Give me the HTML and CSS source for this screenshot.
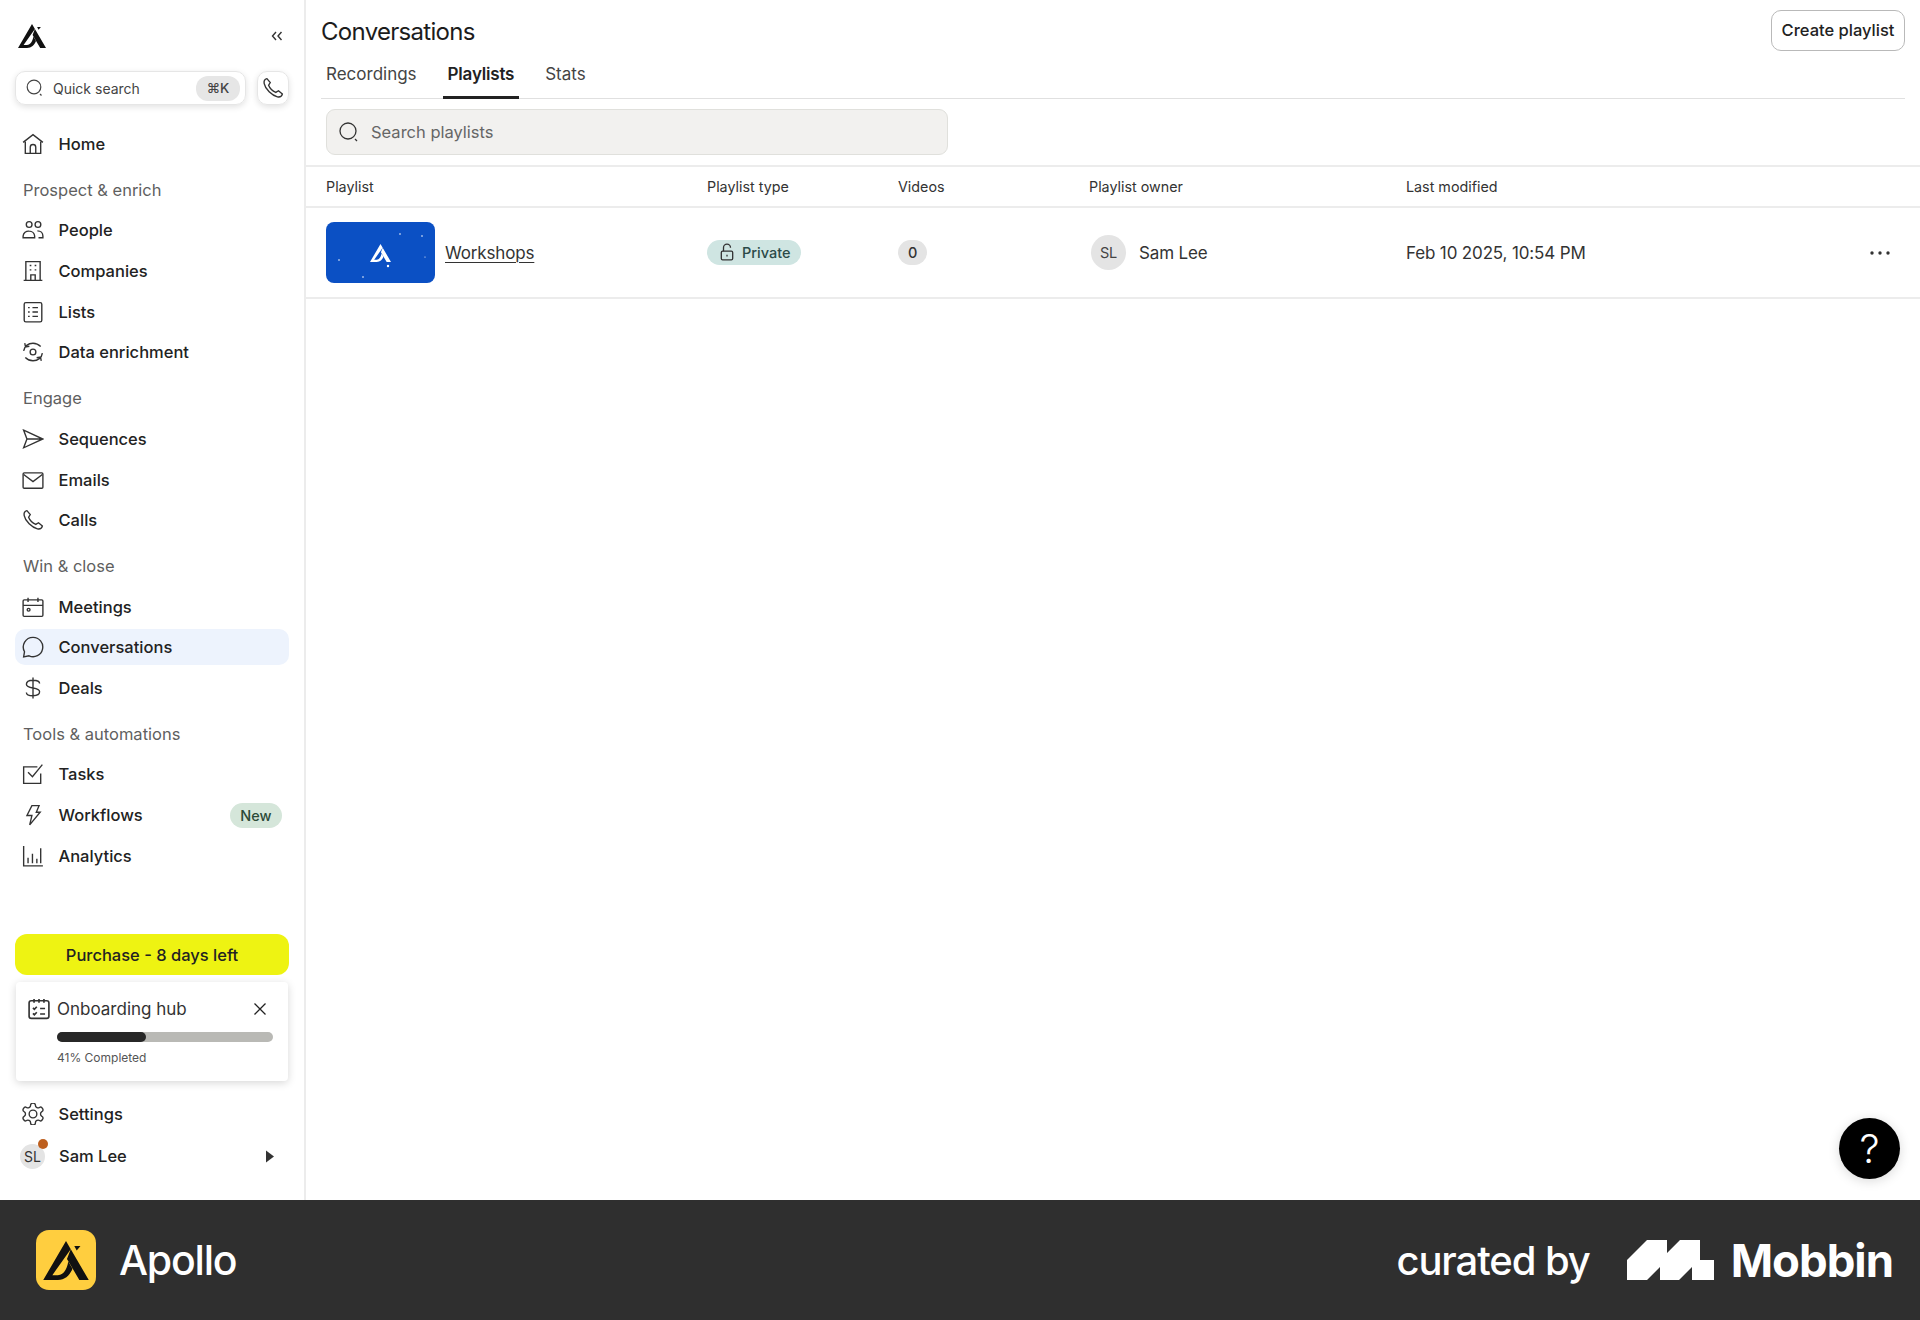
FILE: index.html
```html
<!DOCTYPE html>
<html lang="en">
<head>
    <meta charset="UTF-8">
    <meta name="viewport" content="width=device-width, initial-scale=1.0">
    <title>Conversations</title>
    <link rel="stylesheet" href="styles.css">
</head>
<body>
    <div class="shell">
        <!-- Sidebar -->
        <aside class="sidebar">
            <div class="brand-row">
                <svg class="brand-logo" viewBox="0 0 28 24"><path d="M14 0 28 24h-5.800L14.600 11 16.900 5z"/><path d="M14 0 16.900 5 5.600 21H9c3.400 0 5.600-3.600 6.400-8.400l2.600 4.400C16.400 21 13.500 24 9 24H0z"/><path d="M19.100 3h3.800l-2.300 2.800z"/></svg>
                <svg class="collapse" viewBox="0 0 12 10"><path d="M5 1 1.500 5 5 9M10.500 1 7 5l3.500 4"/></svg>
            </div>
            <div class="search-row">
                <div class="quick-search">
                    <svg class="icon-small" viewBox="0 0 20 20"><circle cx="9" cy="9" r="6.800"/><path d="m15 16 1.500 1.500"/></svg>
                    <span class="quick-label">Quick search</span>
                    <span class="kbd">⌘K</span>
                </div>
                <div class="phone-button">
                    <svg class="icon" viewBox="0 0 20 20"><path d="M4.500 1.500C2.500 2 1.500 3.500 2 6c1 5 7 11 12 12 2.500.5 4-.5 4.500-2.500l-3.500-3-2.500 1.500C10 13 7 10 6 7.500L7.500 5z"/></svg>
                </div>
            </div>

            <nav class="nav">
                <a class="nav-item"><svg class="icon" viewBox="0 0 20 20"><path d="M1 8.500 10 1.500l9 7M3 8v10.500h14V8M7.500 18.500V13a2.500 2.500 0 0 1 5 0v5.500"/></svg>Home</a>

                <div class="nav-label">Prospect &amp; enrich</div>
                <a class="nav-item"><svg class="icon" viewBox="0 0 20 20"><circle cx="6.500" cy="5" r="2.600"/><circle cx="14.500" cy="5" r="2.600"/><path d="M1 17v-1.500a5 5 0 0 1 5.500-4.500 5 5 0 0 1 5 4.500V17zM14 10.800c3 0 5 2 5 4.700V17h-4"/></svg>People</a>
                <a class="nav-item"><svg class="icon" viewBox="0 0 20 20"><path d="M1.500 18.500h17M3.500 18.500V1.500h13v17M8 18.500v-5h4v5M7 5h1.500M11.500 5H13M7 9h1.500M11.500 9H13"/></svg>Companies</a>
                <a class="nav-item"><svg class="icon" viewBox="0 0 20 20"><rect x="2" y="1.500" width="16" height="17.500" rx="1.500"/><path d="M5.500 6H7M9.500 6h5M5.500 10H7M9.500 10h5M5.500 14H7M9.500 14h5"/></svg>Lists</a>
                <a class="nav-item"><svg class="icon" viewBox="0 0 20 20"><circle cx="10" cy="10" r="2.600"/><path d="M1.500 9C2 5 5.500 2 10 2c2.500 0 5 1 7 3M18.500 11c-.5 4-4 7-8.500 7-2.500 0-5-1-7-3M2.500 2l.7 3.500 3.500-.7M17.500 18l-.7-3.500-3.500.7"/></svg>Data enrichment</a>

                <div class="nav-label">Engage</div>
                <a class="nav-item"><svg class="icon" viewBox="0 0 20 20"><path d="M1.500 2 19 10 1.500 18l3-8zM4.500 10H19"/></svg>Sequences</a>
                <a class="nav-item"><svg class="icon" viewBox="0 0 20 20"><rect x="1" y="3.500" width="18" height="14" rx="1"/><path d="m1.500 5 8.500 6.500L18.500 5"/></svg>Emails</a>
                <a class="nav-item"><svg class="icon" viewBox="0 0 20 20"><path d="M4.500 1.500C2.500 2 1.500 3.500 2 6c1 5 7 11 12 12 2.500.5 4-.5 4.500-2.500l-3.500-3-2.500 1.500C10 13 7 10 6 7.500L7.500 5z"/></svg>Calls</a>

                <div class="nav-label">Win &amp; close</div>
                <a class="nav-item"><svg class="icon" viewBox="0 0 20 20"><rect x="1" y="3.500" width="18" height="15" rx="1"/><path d="M1 8.500h18M5.500 1.500v4M14.500 1.500v4"/><circle cx="6" cy="12.500" r="1.300"/></svg>Meetings</a>
                <a class="nav-item active"><svg class="icon" viewBox="0 0 20 20"><path d="M10 1.200a8.800 8.800 0 1 1-3.600 16.800L1.500 19l.8-4.700A8.800 8.800 0 0 1 10 1.200z"/></svg>Conversations</a>
                <a class="nav-item"><svg class="icon" viewBox="0 0 20 20"><path d="M16 6c0-2-2.500-3-6-3S4 4.500 4 6.700 6.500 9.500 10 10s6 1.300 6 3.500-2.500 3.500-6 3.500-6-1-6-3M10 .5v19"/></svg>Deals</a>

                <div class="nav-label">Tools &amp; automations</div>
                <a class="nav-item"><svg class="icon" viewBox="0 0 20 20"><path d="M17 9.500V18.500H1.500V3.500H14M5.500 8.500l4 4L18.500 1.500"/></svg>Tasks</a>
                <a class="nav-item item-badge"><svg class="icon" viewBox="0 0 20 20"><path d="M9 1.500h6.500L13 7.500h3.500L7 19l2-8.500H4.500z"/></svg>Workflows<span class="badge-new">New</span></a>
                <a class="nav-item"><svg class="icon" viewBox="0 0 20 20"><path d="M1.500 1v18h17.500M5.500 16.500v-5M9.500 16.500V8M13.500 16.500v-4M17 16.500V3"/></svg>Analytics</a>
            </nav>

            <div class="sidebar-bottom">
                <button class="purchase">Purchase - 8 days left</button>
                <div class="hub-card">
                    <div class="hub-head">
                        <svg class="icon hub-icon" viewBox="0 0 20 20"><rect x="1" y="2.500" width="18" height="16" rx="2"/><path d="M5.500.8v3.500M10 .8v3.500M14.500.8v3.500M4.500 9l1.300 1.300L8 8M11 9.500h4.500M4.500 14l1.300 1.300L8 13M11 14.500h4.500"/></svg>
                        <span class="hub-title">Onboarding hub</span>
                        <svg class="hub-close" viewBox="0 0 14 14"><path d="m1.500 1.500 11 11M12.500 1.500l-11 11"/></svg>
                    </div>
                    <div class="progress"><div class="progress-fill" style="width: 41%"></div></div>
                    <div class="progress-text">41% Completed</div>
                </div>
                <a class="nav-item"><svg class="icon" viewBox="2 2 20 20"><path d="M12.220 2h-.44a2 2 0 0 0-2 2v.18a2 2 0 0 1-1 1.730l-.43.25a2 2 0 0 1-2 0l-.15-.08a2 2 0 0 0-2.730.73l-.22.38a2 2 0 0 0 .73 2.730l.15.1a2 2 0 0 1 1 1.720v.51a2 2 0 0 1-1 1.740l-.15.09a2 2 0 0 0-.73 2.730l.22.38a2 2 0 0 0 2.730.73l.15-.08a2 2 0 0 1 2 0l.43.25a2 2 0 0 1 1 1.730V20a2 2 0 0 0 2 2h.44a2 2 0 0 0 2-2v-.18a2 2 0 0 1 1-1.730l.43-.25a2 2 0 0 1 2 0l.15.08a2 2 0 0 0 2.730-.73l.22-.39a2 2 0 0 0-.73-2.730l-.15-.08a2 2 0 0 1-1-1.740v-.5a2 2 0 0 1 1-1.740l.15-.09a2 2 0 0 0 .73-2.730l-.22-.38a2 2 0 0 0-2.730-.73l-.15.08a2 2 0 0 1-2 0l-.43-.25a2 2 0 0 1-1-1.730V4a2 2 0 0 0-2-2z"/><circle cx="12" cy="12" r="3.500"/></svg>Settings</a>
                <a class="nav-item user-item">
                    <span class="user-avatar">SL<span class="user-dot"></span></span>Sam Lee
                    <svg class="caret" viewBox="0 0 8 12"><path d="M0 0v12l8-6z"/></svg>
                </a>
            </div>
        </aside>

        <!-- Main content -->
        <main class="main">
            <div class="page-head">
                <div class="title-row">
                    <h1>Conversations</h1>
                    <button class="create-button">Create playlist</button>
                </div>
                <div class="tabs">
                    <a class="tab">Recordings</a>
                    <a class="tab tab-active">Playlists</a>
                    <a class="tab">Stats</a>
                </div>
            </div>

            <div class="filter-bar">
                <div class="search-box">
                    <svg class="search-icon" viewBox="0 0 22 22"><circle cx="10" cy="10" r="8"/><path d="m17 18 2 2"/></svg>
                    <span>Search playlists</span>
                </div>
            </div>

            <div class="table-row table-head">
                <div>Playlist</div>
                <div>Playlist type</div>
                <div>Videos</div>
                <div>Playlist owner</div>
                <div>Last modified</div>
                <div></div>
            </div>
            <div class="table-row table-body">
                <div class="cell-name">
                    <div class="thumb">
                        <svg class="thumb-logo" viewBox="0 0 28 24"><path d="M14 0 28 24h-5.800L14.600 11 16.900 5z"/><path d="M14 0 16.900 5 5.600 21H9c3.400 0 5.600-3.600 6.400-8.400l2.600 4.400C16.400 21 13.500 24 9 24H0z"/></svg>
                        <svg class="thumb-stars" viewBox="0 0 109 61"><circle cx="13" cy="38" r=".8"/><circle cx="37" cy="55" r=".8"/><circle cx="62" cy="44" r="1.200"/><circle cx="74" cy="12" r=".8"/><circle cx="96" cy="14" r=".8"/><circle cx="99" cy="35" r=".6"/></svg>
                    </div>
                    <a class="playlist-link">Workshops</a>
                </div>
                <div>
                    <span class="pill-private">
                        <svg class="lock" viewBox="0 0 16 20"><path d="M4 9V5a4 4 0 0 1 8 0"/><rect x="1.500" y="9" width="13" height="10" rx="1.500"/><path d="M8 13v2"/></svg>
                        Private
                    </span>
                </div>
                <div><span class="pill-count">0</span></div>
                <div class="cell-owner"><span class="owner-avatar">SL</span>Sam Lee</div>
                <div>Feb 10 2025, 10:54 PM</div>
                <div class="cell-more">
                    <svg class="more" viewBox="0 0 20 4"><circle cx="2" cy="2" r="1.700"/><circle cx="10" cy="2" r="1.700"/><circle cx="18" cy="2" r="1.700"/></svg>
                </div>
            </div>

            <button class="help-button">?</button>
        </main>
    </div>

    <!-- Attribution bar -->
    <footer class="footer">
        <div class="footer-app">
            <div class="app-tile">
                <svg class="tile-logo" viewBox="0 0 28 24"><path d="M14 0 28 24h-5.800L14.600 11 16.900 5z"/><path d="M14 0 16.900 5 5.600 21H9c3.400 0 5.600-3.600 6.400-8.400l2.600 4.400C16.400 21 13.500 24 9 24H0z"/><path d="M19.100 3h3.800l-2.300 2.800z"/></svg>
            </div>
            <span class="app-name">Apollo</span>
        </div>
        <div class="footer-credit">
            <span class="curated">curated by</span>
            <svg class="mobbin-logo" viewBox="0 0 87 40"><path d="M0 40V20L20 0h20v13L53 0h20v20h14v20H65V27L52 40H33V27L20 40z"/></svg>
            <span class="mobbin-name">Mobbin</span>
        </div>
    </footer>
</body>
</html>
```

FILE: styles.css
```css
* {
    box-sizing: border-box;
}
body {
    font-family: "Inter", "Liberation Sans", sans-serif;
    background-color: #ffffff;
    color: #222222;
    margin: 0;
    padding: 0;
}
svg {
    flex-shrink: 0;
}
.shell {
    display: flex;
    height: 1200px;
}

/* Sidebar */
.sidebar {
    width: 306px;
    height: 100%;
    padding: 0 15px 26px;
    border-right: 2px solid #ececec;
    display: flex;
    flex-direction: column;
    flex-shrink: 0;
}
.brand-row {
    height: 71px;
    display: flex;
    align-items: center;
    justify-content: space-between;
    padding: 0 6px 0 3px;
}
.brand-logo {
    width: 28px;
    height: 24px;
    fill: #111111;
    margin-top: 1px;
}
.collapse {
    width: 12px;
    height: 10px;
    fill: none;
    stroke: #333333;
    stroke-width: 1.4;
}
.search-row {
    display: flex;
    gap: 11px;
    height: 34px;
}
.quick-search {
    width: 231px;
    display: flex;
    align-items: center;
    padding: 0 5px 0 9px;
    border: 1px solid #e6e6e6;
    border-radius: 10px;
    box-shadow: 0 2px 6px rgba(0, 0, 0, 0.12);
    font-size: 14px;
    color: #444444;
}
.icon-small {
    width: 20px;
    height: 20px;
    fill: none;
    stroke: #444444;
    stroke-width: 1.2;
}
.quick-label {
    margin-left: 8px;
    flex: 1;
}
.kbd {
    background-color: #e6e6e6;
    border-radius: 12px;
    width: 44px;
    height: 25px;
    display: flex;
    align-items: center;
    justify-content: center;
    font-size: 13.5px;
    font-weight: 500;
}
.phone-button {
    width: 32px;
    display: flex;
    align-items: center;
    justify-content: center;
    border: 1px solid #e6e6e6;
    border-radius: 10px;
    box-shadow: 0 2px 6px rgba(0, 0, 0, 0.12);
}
.icon {
    width: 22px;
    height: 22px;
    fill: none;
    stroke: #333333;
    stroke-width: 1.25;
}
.nav {
    margin-top: 21px;
    display: flex;
    flex-direction: column;
    gap: 4.7px;
}
.nav-item {
    height: 36px;
    display: flex;
    align-items: center;
    gap: 14.5px;
    padding: 0 7px;
    border-radius: 10px;
    font-size: 16.5px;
    font-weight: 500;
    color: #222222;
}
.nav-item.active {
    background-color: #edf3fd;
}
.nav-label {
    height: 36px;
    margin-top: 5px;
    padding: 0 8px;
    display: flex;
    align-items: center;
    font-size: 16.5px;
    color: #5f5f5f;
}
.badge-new {
    margin-left: auto;
    background-color: #d5e6da;
    color: #2c4a38;
    font-size: 14.5px;
    width: 52px;
    height: 25px;
    border-radius: 13px;
    display: flex;
    align-items: center;
    justify-content: center;
}
.sidebar-bottom {
    margin-top: auto;
    display: flex;
    flex-direction: column;
}
.purchase {
    height: 41px;
    border: none;
    border-radius: 12px;
    background-color: #eef312;
    color: #222222;
    font-family: inherit;
    font-size: 16.5px;
    font-weight: 500;
}
.hub-card {
    margin: 7px 1px 0;
    height: 99px;
    padding: 16px 15px 0 12px;
    border-radius: 4px;
    box-shadow: 0 2px 8px rgba(0, 0, 0, 0.16);
}
.hub-head {
    display: flex;
    align-items: center;
    height: 22px;
}
.hub-icon {
    stroke-width: 1.5;
}
.hub-title {
    margin-left: 7px;
    font-size: 17px;
    color: #333333;
    flex: 1;
}
.hub-close {
    width: 14px;
    height: 14px;
    fill: none;
    stroke: #222222;
    stroke-width: 1.3;
    margin-right: 6px;
}
.progress {
    margin: 12px 0 0 29px;
    height: 10px;
    border-radius: 5px;
    background-color: #b9b9b5;
}
.progress-fill {
    height: 100%;
    border-radius: 5px;
    background-color: #272727;
}
.progress-text {
    margin: 8px 0 0 29px;
    font-size: 12px;
    line-height: 15px;
    color: #555555;
}
.sidebar-bottom .nav-item {
    margin-top: 15px;
}
.sidebar-bottom .user-item {
    margin-top: 6px;
    padding-left: 5px;
    gap: 14px;
}
.user-avatar {
    position: relative;
    width: 25px;
    height: 25px;
    border-radius: 50%;
    background-color: #e4e4e4;
    display: flex;
    align-items: center;
    justify-content: center;
    font-size: 14px;
    font-weight: 400;
    color: #333333;
}
.user-dot {
    position: absolute;
    top: -5px;
    right: -3px;
    width: 10px;
    height: 10px;
    border-radius: 50%;
    background-color: #bd5f1e;
}
.caret {
    margin-left: auto;
    margin-right: 8px;
    width: 8px;
    height: 13px;
    fill: #333333;
}

/* Main */
.main {
    position: relative;
    flex: 1;
}
.page-head {
    margin: 0 15px;
    height: 99px;
    border-bottom: 1px solid #e0e0e0;
}
.title-row {
    height: 60px;
    display: flex;
    justify-content: space-between;
    align-items: flex-start;
}
h1 {
    margin: 18px 0 0;
    font-size: 24px;
    line-height: 28px;
    font-weight: 400;
    letter-spacing: -0.7px;
    color: #1c1c1c;
}
.create-button {
    margin-top: 10px;
    width: 134px;
    height: 41px;
    padding-bottom: 3px;
    background-color: #ffffff;
    border: 1px solid #b9b9b9;
    border-radius: 10px;
    font-family: inherit;
    font-size: 16.5px;
    font-weight: 500;
    color: #222222;
}
.tabs {
    display: flex;
    gap: 21px;
    height: 39px;
}
.tab {
    height: 39px;
    padding: 0 5px;
    line-height: 28px;
    font-size: 17px;
    color: #444444;
}
.tab-active {
    font-weight: 600;
    letter-spacing: -0.2px;
    color: #222222;
    border-bottom: 3px solid #222222;
}
.filter-bar {
    height: 68px;
    padding: 10px 20px 0;
    border-bottom: 2px solid #ececec;
}
.search-box {
    width: 622px;
    height: 46px;
    display: flex;
    align-items: center;
    padding: 0 11px;
    gap: 11px;
    background-color: #f2f1ef;
    border: 1px solid #e0e0dc;
    border-radius: 9px;
    font-size: 16.5px;
    color: #666666;
}
.search-icon {
    width: 22px;
    height: 22px;
    fill: none;
    stroke: #333333;
    stroke-width: 1.3;
}
.table-row {
    display: grid;
    grid-template-columns: 381px 191px 191px 317px 1fr 50px;
    align-items: center;
    padding-left: 20px;
    border-bottom: 2px solid #ececec;
}
.table-head {
    height: 41px;
    font-size: 14.3px;
    color: #333333;
}
.table-body {
    height: 91px;
    font-size: 17px;
    letter-spacing: -0.15px;
    color: #333333;
}
.cell-name {
    display: flex;
    align-items: center;
    gap: 10px;
}
.thumb {
    position: relative;
    width: 109px;
    height: 61px;
    background-color: #0b50c4;
    border-radius: 8px;
    display: flex;
    align-items: center;
    justify-content: center;
}
.thumb-logo {
    width: 21px;
    height: 18px;
    fill: #ffffff;
}
.thumb-stars {
    position: absolute;
    top: 0;
    left: 0;
    width: 100%;
    height: 100%;
    fill: #ffffff;
}
.playlist-link {
    text-decoration: underline;
    text-underline-offset: 3px;
    text-decoration-thickness: 1px;
}
.pill-private {
    display: inline-flex;
    align-items: center;
    gap: 8px;
    height: 25px;
    padding: 0 10px 0 13px;
    background-color: #cfe5e2;
    border-radius: 13px;
    font-size: 14.5px;
    font-weight: 500;
    letter-spacing: 0;
    color: #2b4a48;
}
.lock {
    width: 14px;
    height: 18px;
    fill: none;
    stroke: #333333;
    stroke-width: 1.5;
}
.pill-count {
    display: inline-flex;
    align-items: center;
    justify-content: center;
    width: 29px;
    height: 25px;
    background-color: #e4e4e4;
    border-radius: 13px;
    font-size: 14.5px;
    font-weight: 500;
}
.cell-owner {
    display: flex;
    align-items: center;
    gap: 13px;
    padding-left: 2px;
}
.owner-avatar {
    width: 35px;
    height: 35px;
    border-radius: 50%;
    background-color: #e4e4e4;
    display: flex;
    align-items: center;
    justify-content: center;
    font-size: 14.5px;
    color: #444444;
}
.cell-more {
    display: flex;
}
.more {
    width: 20px;
    height: 4px;
    fill: #333333;
}
.help-button {
    position: absolute;
    top: 1118px;
    right: 20px;
    width: 61px;
    height: 61px;
    border: none;
    border-radius: 50%;
    background-color: #000000;
    color: #ffffff;
    font-family: inherit;
    font-size: 40px;
    font-weight: 300;
    box-shadow: 0 2px 12px rgba(0, 0, 0, 0.15);
}

/* Footer */
.footer {
    height: 120px;
    background-color: #2f2f2f;
    color: #ffffff;
    display: flex;
    align-items: center;
    justify-content: space-between;
    padding: 0 27px 0 36px;
}
.footer-app {
    display: flex;
    align-items: center;
    gap: 23px;
}
.app-tile {
    width: 60px;
    height: 60px;
    background-color: #ffce3f;
    border-radius: 13px;
    display: flex;
    align-items: center;
    justify-content: center;
}
.tile-logo {
    width: 46px;
    height: 39px;
    fill: #111111;
}
.app-name {
    font-size: 41px;
    font-weight: 500;
    letter-spacing: -1.2px;
}
.footer-credit {
    display: flex;
    align-items: center;
}
.curated {
    font-size: 40px;
    font-weight: 500;
    letter-spacing: -1.1px;
    margin-right: 37px;
}
.mobbin-logo {
    width: 87px;
    height: 40px;
    fill: #ffffff;
    margin-right: 17px;
}
.mobbin-name {
    font-size: 45.5px;
    font-weight: 700;
    letter-spacing: -1px;
}
```
